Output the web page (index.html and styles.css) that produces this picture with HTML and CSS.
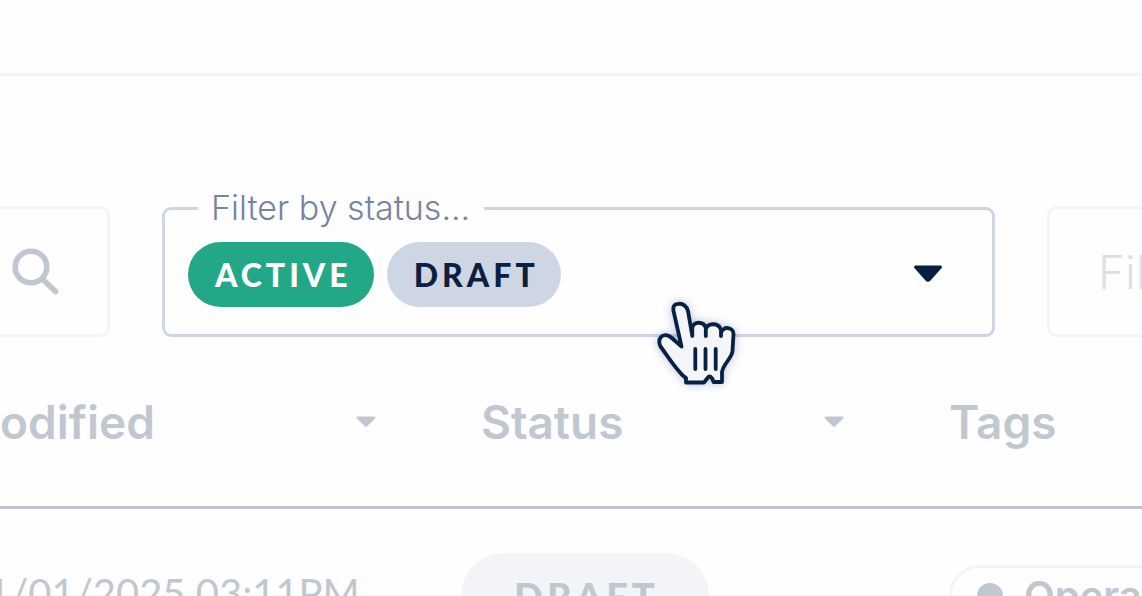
FILE: index.html
```html
<!DOCTYPE html>
<html lang="en">
<head>
<meta charset="utf-8">
<meta name="viewport" content="width=device-width, initial-scale=1">
<title>Filter by status</title>
<link rel="stylesheet" href="styles.css">
</head>
<body>
<header class="topbar"></header>
<main class="content">
  <form class="filters">
    <div class="field field-search">
      <button class="icon-button" type="button" aria-label="Search">
        <svg class="search-icon" viewBox="0 0 48 48" aria-hidden="true">
          <circle cx="20" cy="19" r="15.8"/>
          <path d="M32 31.500 44.500 43.500"/>
        </svg>
      </button>
    </div>
    <fieldset class="field field-status">
      <legend class="field-legend">Filter by status...</legend>
      <button class="status-select" type="button" aria-haspopup="listbox" aria-label="Filter by status: Active, Draft">
        <span class="chips">
          <span class="chip chip-active">ACTIVE</span>
          <span class="chip chip-draft">DRAFT</span>
        </span>
        <svg class="caret" viewBox="0 0 30 20" aria-hidden="true">
          <path d="M2.500 3H27.500L16.200 15.800Q15 17 13.800 15.800Z"/>
        </svg>
      </button>
      <svg class="pointer" viewBox="0 0 110 110" aria-hidden="true">
        <path d="M41.500 56.500 34 23C32 16.500 34.500 13.800 38.500 13.800C43 13.500 46.500 16.500 48 21L52.300 46V38C53 31 64 31 65.800 38V46V39C68 32.500 79 32.500 81 40V46V43C83 35.500 93.500 37 93.500 44L92.500 61C91.500 69 83 74 82 82V92H73.500C72.500 87 69 84.500 67.500 88L64 92.500H46V88C39 84 29 68 20.500 56.500C17 49 22 43 29 46C34 49 37.500 53.500 41.500 56.500Z"/>
        <path d="M55.300 59V79M65.500 59V79M75.700 59V79"/>
      </svg>
    </fieldset>
    <div class="field field-tags">
      <input class="tags-input" type="text" placeholder="Filter by tags..." aria-label="Filter by tags">
    </div>
  </form>
  <table class="records">
    <colgroup><col class="col-date"><col class="col-status"><col></colgroup>
    <thead>
      <tr>
        <th class="cell-date" scope="col"><span class="heading">odified
          <svg class="sort" viewBox="0 0 20 12" aria-hidden="true"><path d="M1.500 1.500H18.500L10 10Z"/></svg></span></th>
        <th scope="col"><span class="heading">Status
          <svg class="sort" viewBox="0 0 20 12" aria-hidden="true"><path d="M1.500 1.500H18.500L10 10Z"/></svg></span></th>
        <th scope="col"><span class="heading">Tags</span></th>
      </tr>
    </thead>
    <tbody>
      <tr>
        <td><span class="date">1/01/2025 03:11PM</span></td>
        <td><span class="badge">DRAFT</span></td>
        <td class="cell-tag"><span class="tag"><span class="dot"></span>Operations</span></td>
      </tr>
    </tbody>
  </table>
</main>
</body>
</html>
```
FILE: styles.css
```css
* { box-sizing: border-box; }

body {
  margin: 0;
  height: 100vh;
  overflow: hidden;
  background: #fefefe;
  color: #c1c7d0;
  font-family: Lato, "Open Sans", sans-serif;
}

button, input { font: inherit; color: inherit; background: none; border: 0; padding: 0; }

.topbar { height: 76px; border-bottom: 3px solid #f3f4f8; }

.content { padding-top: 112px; }

.filters {
  display: grid;
  grid-template-columns: 110px minmax(0, 1fr) 95px;
  align-items: end;
  gap: 52px;
}

.field { height: 131px; border: 3px solid #f3f4f8; }

.field-search {
  display: flex;
  align-items: center;
  justify-content: flex-end;
  padding-right: 48px;
  border-left: 0;
  border-radius: 0 9px 9px 0;
}

.icon-button { display: flex; }
.search-icon { width: 48px; height: 48px; fill: none; stroke: #c1c7d0; stroke-width: 5.600; stroke-linecap: round; }

.field-status {
  position: relative;
  height: 149px;
  min-width: 0;
  margin: 0;
  padding: 0 23px;
  border-color: #ced5e3;
  border-radius: 9px;
}

.field-legend {
  margin-left: 10px;
  padding: 0 14px 0 13px;
  color: #7684a3;
  font-family: Inter, Lato, sans-serif;
  font-size: 34px;
  font-weight: 300;
  line-height: 40px;
}

.status-select {
  display: flex;
  align-items: center;
  justify-content: space-between;
  width: 100%;
  height: 92px;
  padding-right: 26px;
}

.chips { display: flex; gap: 13px; }

.chip {
  display: flex;
  padding: 0 22px 0 27px;
  border-radius: 33px;
  font-size: 32px;
  font-weight: 900;
  line-height: 65px;
  letter-spacing: 4px;
}
.chip-active { background: #22a887; color: #fff; }
.chip-draft { background: #ced5e3; color: #082142; }

.caret { width: 30px; height: 20px; fill: #082142; stroke: #082142; stroke-width: 3; stroke-linejoin: round; }

.pointer {
  position: absolute;
  right: 242px;
  bottom: -66px;
  width: 110px;
  height: 110px;
  fill: #f3f5f9;
  stroke: #082142;
  stroke-width: 3.800;
  stroke-linecap: round;
  stroke-linejoin: round;
  filter: drop-shadow(0 0 5px rgba(80, 95, 170, 0.4));
}

.field-tags {
  display: flex;
  overflow: hidden;
  padding-left: 48px;
  border-right: 0;
  border-radius: 9px 0 0 9px;
}
.tags-input { width: 100%; min-width: 0; font-family: Inter, Lato, sans-serif; font-size: 46px; font-weight: 300; }
.tags-input::placeholder { color: #dcdfe6; opacity: 1; }

.records { width: 100%; table-layout: fixed; border-collapse: collapse; }
.col-date { width: 461px; }
.col-status { width: 468px; }

th {
  height: 170px;
  padding: 2px 85px 0 20px;
  border-bottom: 3px solid #c1c5d0;
  text-align: left;
}
th.cell-date { padding-left: 0; }
.heading {
  display: flex;
  align-items: center;
  justify-content: space-between;
  font-family: Inter, Lato, sans-serif;
  font-size: 46px;
  font-weight: 600;
  line-height: 56px;
}
th:last-child { padding-right: 0; }
.sort { width: 20px; height: 12px; fill: #c1c7d0; stroke: #c1c7d0; stroke-width: 2; stroke-linejoin: round; }

td { padding: 44px 0 0; vertical-align: top; white-space: nowrap; }
.date { display: block; margin-left: -13px; font-size: 40px; line-height: 80px; }
.badge {
  display: inline-block;
  padding: 0 50px 0 53px;
  border-radius: 43px;
  background: #f3f4f8;
  font-size: 38px;
  font-weight: 900;
  line-height: 86px;
  letter-spacing: 4px;
}
.cell-tag { padding: 56px 0 0 20px; overflow: hidden; }
.tag {
  display: inline-flex;
  align-items: center;
  gap: 21px;
  padding: 0 25px;
  border: 3px solid #f3f4f8;
  border-radius: 32px;
  font-family: Inter, Lato, sans-serif;
  font-size: 40px;
  font-weight: 600;
  line-height: 56px;
}
.dot { width: 26px; height: 26px; border-radius: 50%; background: #c1c7d0; }
```
